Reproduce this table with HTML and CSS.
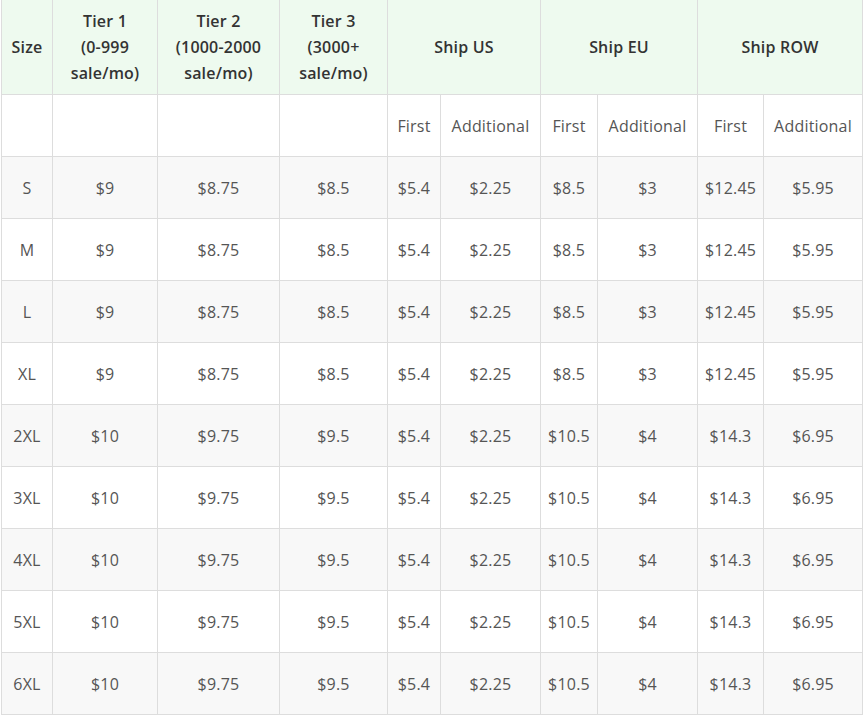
FILE: index.html
```html
<!DOCTYPE html>
<html>
<head>
<meta charset="utf-8">
<link rel="stylesheet" href="styles.css">
</head>
<body>
<table class="price">
  <colgroup>
    <col class="c1"><col class="c2"><col class="c3"><col class="c4"><col class="c5">
    <col class="c6"><col class="c7"><col class="c8"><col class="c9"><col class="c10">
  </colgroup>
  <thead>
    <tr class="head">
      <th>Size</th>
      <th>Tier 1<br>(0-999<br>sale/mo)</th>
      <th>Tier 2<br>(1000-2000<br>sale/mo)</th>
      <th>Tier 3<br>(3000+<br>sale/mo)</th>
      <th colspan="2">Ship US</th>
      <th colspan="2">Ship EU</th>
      <th colspan="2">Ship ROW</th>
    </tr>
  </thead>
  <tbody>
    <tr class="sub">
      <td></td><td></td><td></td><td></td>
      <td>First</td><td>Additional</td><td>First</td><td>Additional</td><td>First</td><td>Additional</td>
    </tr>
    <tr class="alt"><td>S</td><td>$9</td><td>$8.75</td><td>$8.5</td><td>$5.4</td><td>$2.25</td><td>$8.5</td><td>$3</td><td>$12.45</td><td>$5.95</td></tr>
    <tr><td>M</td><td>$9</td><td>$8.75</td><td>$8.5</td><td>$5.4</td><td>$2.25</td><td>$8.5</td><td>$3</td><td>$12.45</td><td>$5.95</td></tr>
    <tr class="alt"><td>L</td><td>$9</td><td>$8.75</td><td>$8.5</td><td>$5.4</td><td>$2.25</td><td>$8.5</td><td>$3</td><td>$12.45</td><td>$5.95</td></tr>
    <tr><td>XL</td><td>$9</td><td>$8.75</td><td>$8.5</td><td>$5.4</td><td>$2.25</td><td>$8.5</td><td>$3</td><td>$12.45</td><td>$5.95</td></tr>
    <tr class="alt"><td>2XL</td><td>$10</td><td>$9.75</td><td>$9.5</td><td>$5.4</td><td>$2.25</td><td>$10.5</td><td>$4</td><td>$14.3</td><td>$6.95</td></tr>
    <tr><td>3XL</td><td>$10</td><td>$9.75</td><td>$9.5</td><td>$5.4</td><td>$2.25</td><td>$10.5</td><td>$4</td><td>$14.3</td><td>$6.95</td></tr>
    <tr class="alt"><td>4XL</td><td>$10</td><td>$9.75</td><td>$9.5</td><td>$5.4</td><td>$2.25</td><td>$10.5</td><td>$4</td><td>$14.3</td><td>$6.95</td></tr>
    <tr><td>5XL</td><td>$10</td><td>$9.75</td><td>$9.5</td><td>$5.4</td><td>$2.25</td><td>$10.5</td><td>$4</td><td>$14.3</td><td>$6.95</td></tr>
    <tr class="alt"><td>6XL</td><td>$10</td><td>$9.75</td><td>$9.5</td><td>$5.4</td><td>$2.25</td><td>$10.5</td><td>$4</td><td>$14.3</td><td>$6.95</td></tr>
  </tbody>
</table>
</body>
</html>
```
FILE: styles.css
```css
html, body {
  margin: 0;
  padding: 0;
  background: #ffffff;
}
body {
  padding-left: 1px;
  font-family: "Open Sans", "Liberation Sans", sans-serif;
}
.price {
  border-collapse: collapse;
  table-layout: fixed;
  width: 862px;
  font-size: 16px;
  letter-spacing: 0.2px;
  color: #555555;
}
.c1 { width: 51px; }
.c2 { width: 105px; }
.c3 { width: 122px; }
.c4 { width: 108px; }
.c5 { width: 53px; }
.c6 { width: 100px; }
.c7 { width: 57px; }
.c8 { width: 100px; }
.c9 { width: 66px; }
.c10 { width: 99px; }
.price th,
.price td {
  border: 1px solid #dddddd;
  text-align: center;
  vertical-align: middle;
  padding: 0 2px;
  white-space: nowrap;
}
.price thead th {
  border-top: none;
  background: #eefaef;
  color: #333333;
  font-weight: 600;
  line-height: 26px;
  height: 94px;
  padding-top: 0;
  padding-bottom: 0;
}
.price tbody td {
  height: 61px;
  line-height: 20px;
}
.price tr.alt td {
  background: #f8f8f8;
}
```
